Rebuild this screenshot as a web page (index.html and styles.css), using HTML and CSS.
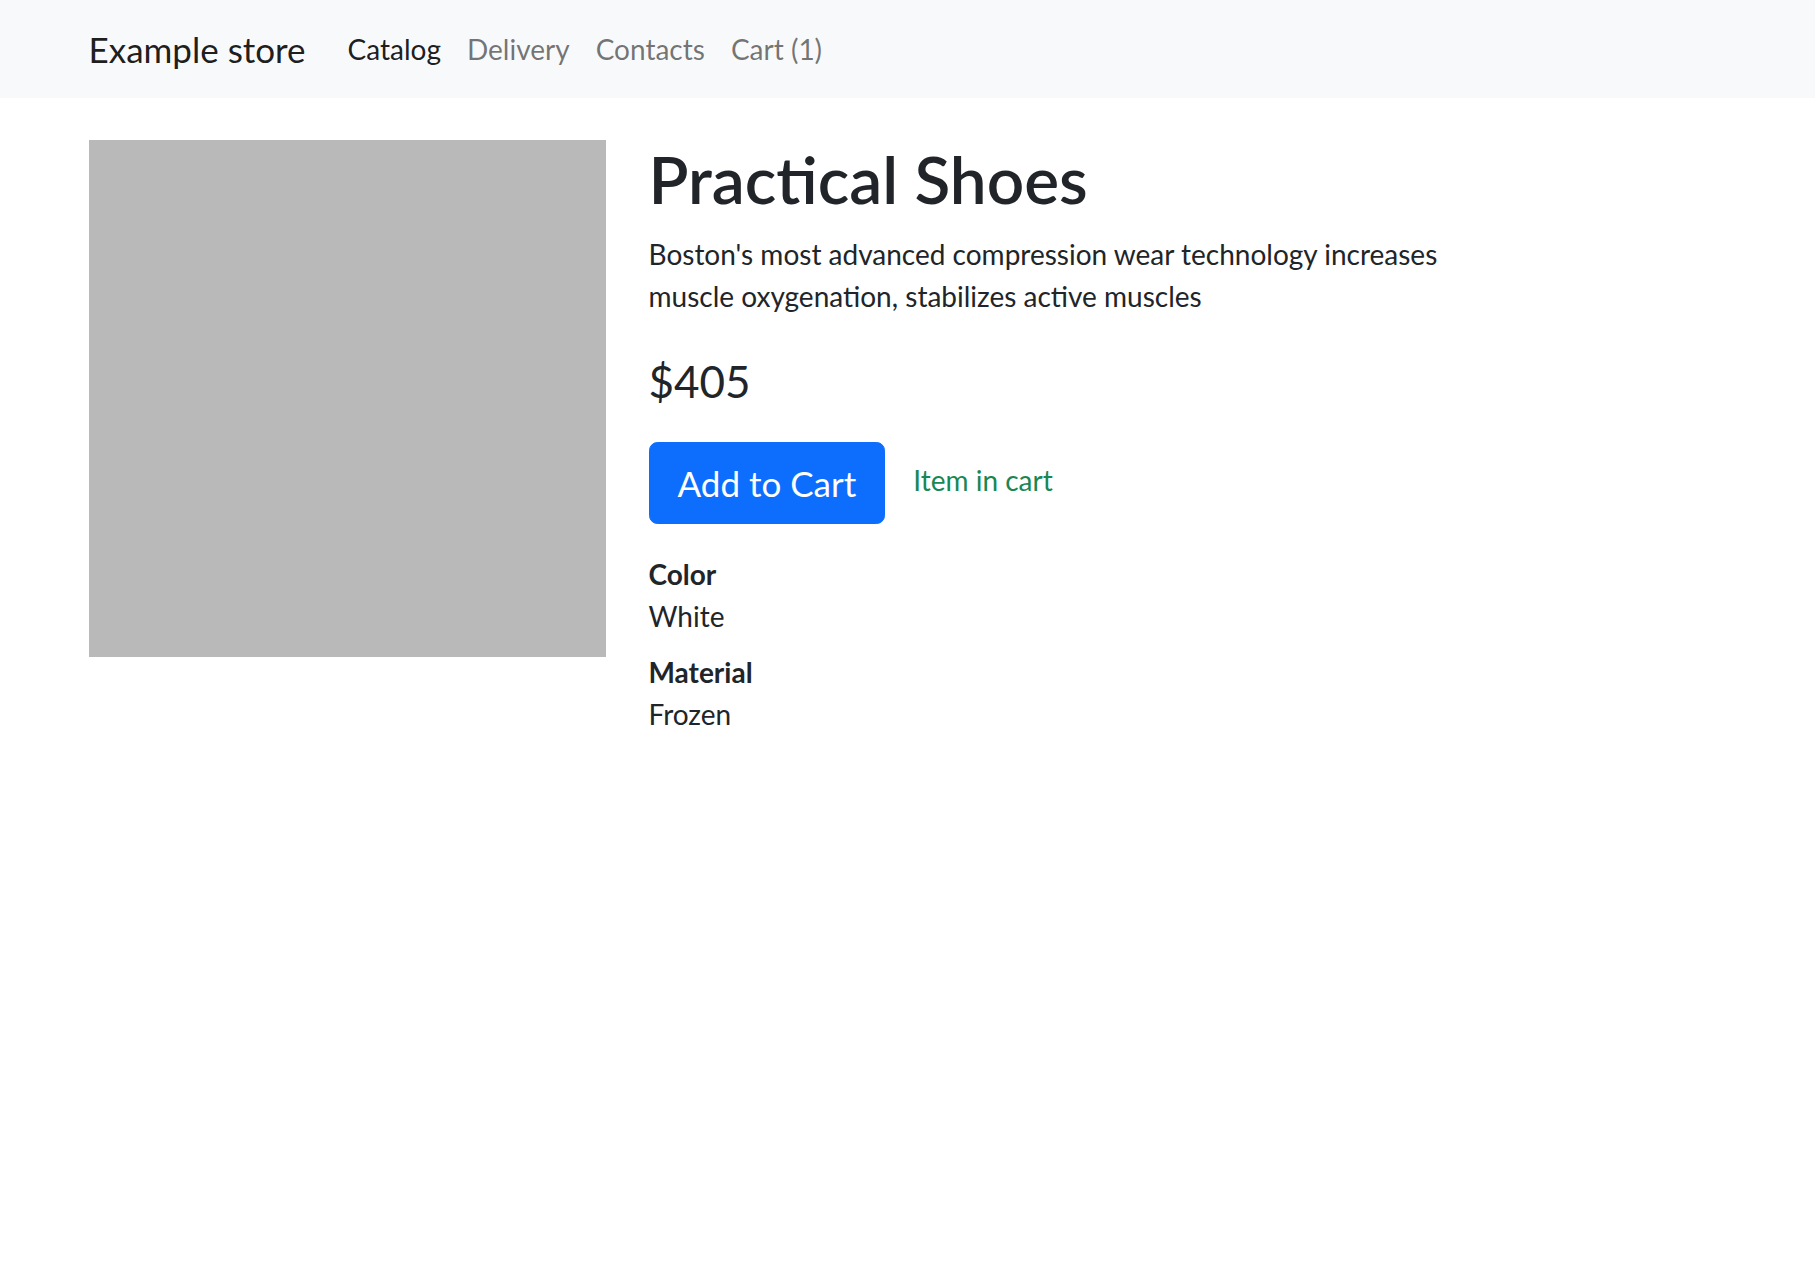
FILE: index.html
```html
<!DOCTYPE html>
<html lang="en">
<head>
<meta charset="utf-8">
<title>Practical Shoes - Example store</title>
<link rel="stylesheet" href="styles.css">
</head>
<body>
<nav class="navbar">
  <div class="container navbar-inner">
    <a class="brand" href="#">Example store</a>
    <ul class="nav">
      <li><a class="nav-link active" href="#">Catalog</a></li>
      <li><a class="nav-link" href="#">Delivery</a></li>
      <li><a class="nav-link" href="#">Contacts</a></li>
      <li><a class="nav-link" href="#">Cart (1)</a></li>
    </ul>
  </div>
</nav>
<main class="container main">
  <div class="product">
    <div class="product-image"></div>
    <div class="product-info">
      <h1 class="title">Practical Shoes</h1>
      <p class="description">Boston's most advanced compression wear technology increases muscle oxygenation, stabilizes active muscles</p>
      <h3 class="price">$405</h3>
      <div class="actions">
        <button class="btn-primary" type="button">Add to Cart</button>
        <span class="in-cart">Item in cart</span>
      </div>
      <dl class="props">
        <dt>Color</dt>
        <dd>White</dd>
        <dt>Material</dt>
        <dd>Frozen</dd>
      </dl>
    </div>
  </div>
</main>
</body>
</html>
```
FILE: styles.css
```css
* { box-sizing: border-box; }

body {
  margin: 0;
  font-family: "Lato", "Open Sans", sans-serif;
  font-size: 28px;
  line-height: 42px;
  color: #212529;
  background: #fff;
}

.container {
  max-width: 1680px;
  margin: 0 auto;
  padding: 0 21px;
}

/* Navbar */
.navbar {
  background: #f8f9fa;
  padding: 14px 0;
}

.navbar-inner {
  display: flex;
  align-items: center;
}

.brand {
  font-size: 35px;
  line-height: 52.5px;
  padding: 5.5px 0;
  margin-right: 28px;
  color: rgba(0, 0, 0, 0.9);
  text-decoration: none;
  white-space: nowrap;
}

.nav {
  display: flex;
  list-style: none;
  margin: 0;
  padding: 0;
}

.nav-link {
  display: block;
  padding: 14px 13px;
  line-height: 42px;
  color: rgba(0, 0, 0, 0.55);
  text-decoration: none;
}

.nav li:first-child .nav-link {
  padding-left: 14px;
}

.nav-link.active {
  color: rgba(0, 0, 0, 0.9);
}

/* Main */
.main {
  padding-top: 42px;
}

.product {
  display: grid;
  grid-template-columns: 518px 1fr;
  column-gap: 42px;
  align-items: start;
}

.product-image {
  width: 517px;
  height: 517px;
  background: #b9b9b9;
}

.title {
  margin: 0 0 14px;
  font-size: 65.7px;
  line-height: 78.8px;
  font-weight: 600;
}

.description {
  margin: 0 0 28px;
  max-width: 830px;
}

.price {
  margin: 0 0 32.2px;
  padding-top: 8px;
  font-size: 44px;
  line-height: 56.7px;
  font-weight: 400;
}

.actions {
  display: flex;
  align-items: center;
  margin-bottom: 28px;
}

.btn-primary {
  font-family: inherit;
  font-size: 35px;
  line-height: 52.5px;
  padding: 14px 28px;
  border: 1.75px solid #0d6efd;
  border-radius: 8.4px;
  background: #0d6efd;
  color: #fff;
  cursor: pointer;
}

.in-cart {
  margin-left: 28px;
  margin-bottom: 6px;
  color: #198754;
}

.props {
  margin: 0;
  padding-top: 1px;
}

.props dt {
  font-weight: 700;
}

.props dd {
  margin: 0 0 14px;
}
```
